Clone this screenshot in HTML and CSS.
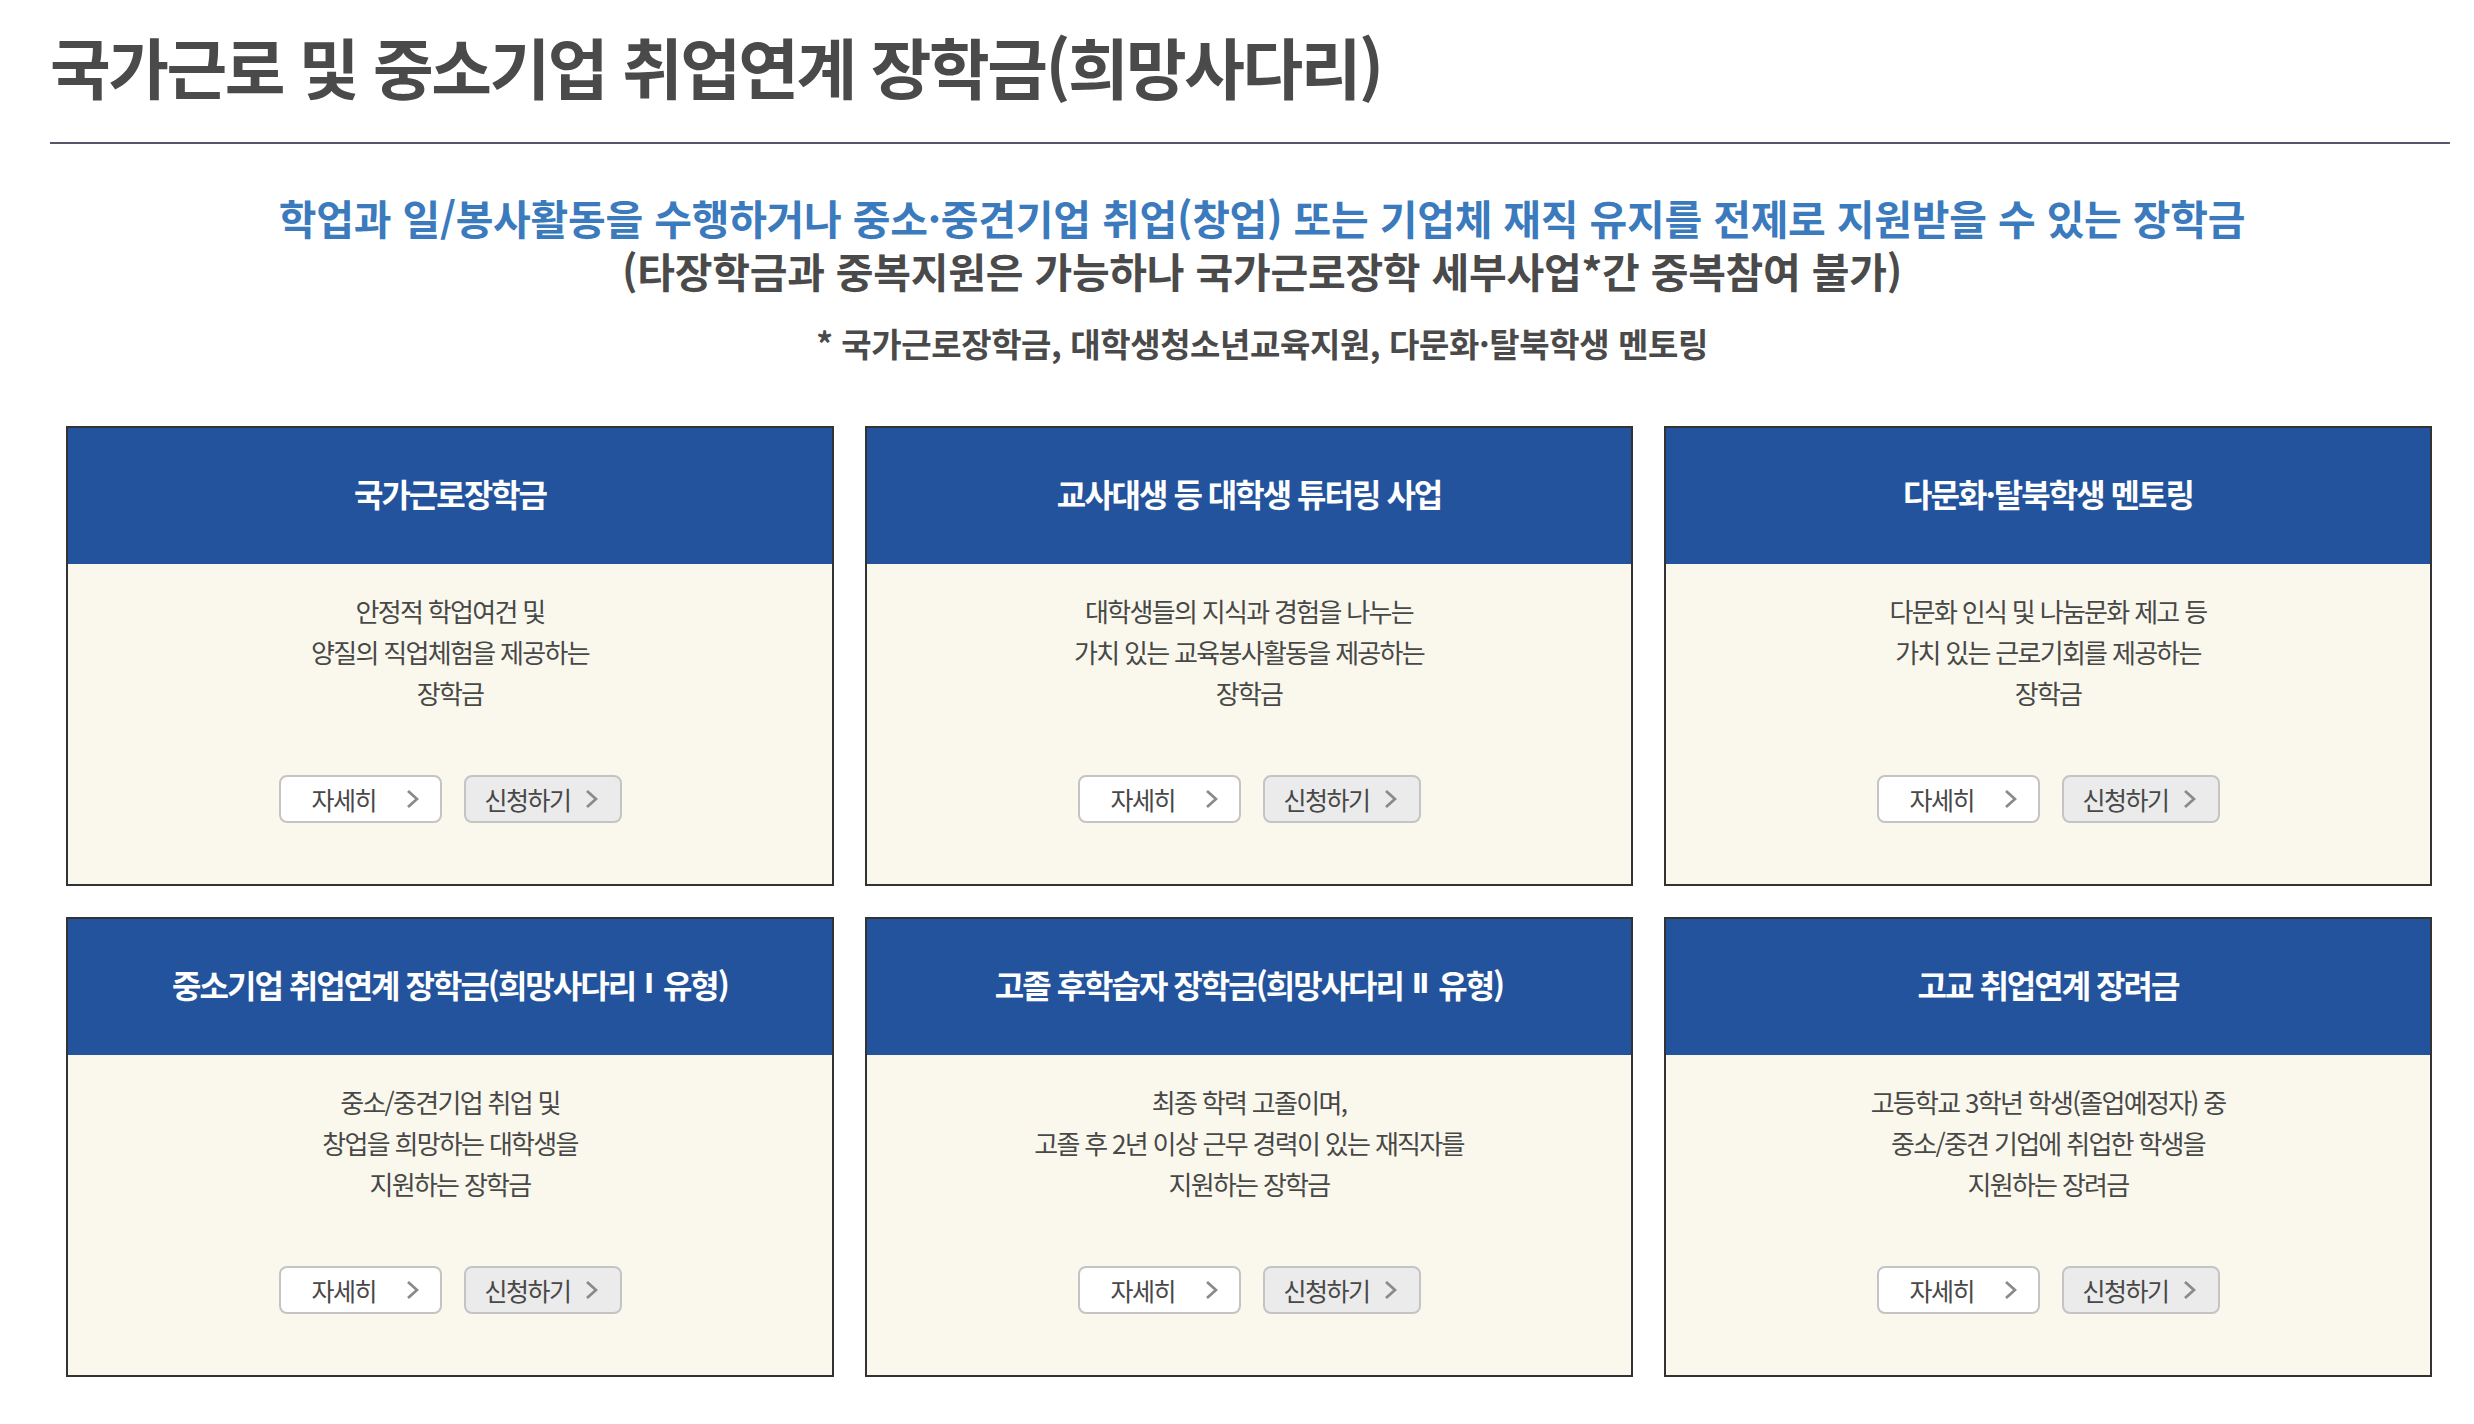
FILE: index.html
```html
<!DOCTYPE html>
<html lang="ko">
<head>
<meta charset="utf-8">
<title>국가근로 및 중소기업 취업연계 장학금(희망사다리)</title>
<link rel="stylesheet" href="styles.css">
</head>
<body>
<div class="page">
  <h1 class="page-title">국가근로 및 중소기업 취업연계 장학금(희망사다리)</h1>

  <div class="intro">
    <p class="intro-main">학업과 일/봉사활동을 수행하거나 중소·중견기업 취업(창업) 또는 기업체 재직 유지를 전제로 지원받을 수 있는 장학금</p>
    <p class="intro-sub">(타장학금과 중복지원은 가능하나 국가근로장학 세부사업*간 중복참여 불가)</p>
    <p class="intro-note">* 국가근로장학금, 대학생청소년교육지원, 다문화·탈북학생 멘토링</p>
  </div>

  <div class="cards">
    <div class="card">
      <div class="card-head">국가근로장학금</div>
      <div class="card-body">
        <p class="card-text">안정적 학업여건 및<br>양질의 직업체험을 제공하는<br>장학금</p>
        <div class="card-btns">
          <a class="btn btn-detail">자세히<svg class="chev" viewBox="0 0 13 20"><polyline points="2,2 11,10 2,18"/></svg></a>
          <a class="btn btn-apply">신청하기<svg class="chev" viewBox="0 0 13 20"><polyline points="2,2 11,10 2,18"/></svg></a>
        </div>
      </div>
    </div>
    <div class="card">
      <div class="card-head">교사대생 등 대학생 튜터링 사업</div>
      <div class="card-body">
        <p class="card-text">대학생들의 지식과 경험을 나누는<br>가치 있는 교육봉사활동을 제공하는<br>장학금</p>
        <div class="card-btns">
          <a class="btn btn-detail">자세히<svg class="chev" viewBox="0 0 13 20"><polyline points="2,2 11,10 2,18"/></svg></a>
          <a class="btn btn-apply">신청하기<svg class="chev" viewBox="0 0 13 20"><polyline points="2,2 11,10 2,18"/></svg></a>
        </div>
      </div>
    </div>
    <div class="card">
      <div class="card-head">다문화·탈북학생 멘토링</div>
      <div class="card-body">
        <p class="card-text">다문화 인식 및 나눔문화 제고 등<br>가치 있는 근로기회를 제공하는<br>장학금</p>
        <div class="card-btns">
          <a class="btn btn-detail">자세히<svg class="chev" viewBox="0 0 13 20"><polyline points="2,2 11,10 2,18"/></svg></a>
          <a class="btn btn-apply">신청하기<svg class="chev" viewBox="0 0 13 20"><polyline points="2,2 11,10 2,18"/></svg></a>
        </div>
      </div>
    </div>
    <div class="card">
      <div class="card-head">중소기업 취업연계 장학금(희망사다리<span class="roman"> Ⅰ </span>유형)</div>
      <div class="card-body">
        <p class="card-text">중소/중견기업 취업 및<br>창업을 희망하는 대학생을<br>지원하는 장학금</p>
        <div class="card-btns">
          <a class="btn btn-detail">자세히<svg class="chev" viewBox="0 0 13 20"><polyline points="2,2 11,10 2,18"/></svg></a>
          <a class="btn btn-apply">신청하기<svg class="chev" viewBox="0 0 13 20"><polyline points="2,2 11,10 2,18"/></svg></a>
        </div>
      </div>
    </div>
    <div class="card">
      <div class="card-head">고졸 후학습자 장학금(희망사다리<span class="roman"> Ⅱ </span>유형)</div>
      <div class="card-body">
        <p class="card-text">최종 학력 고졸이며,<br>고졸 후 2년 이상 근무 경력이 있는 재직자를<br>지원하는 장학금</p>
        <div class="card-btns">
          <a class="btn btn-detail">자세히<svg class="chev" viewBox="0 0 13 20"><polyline points="2,2 11,10 2,18"/></svg></a>
          <a class="btn btn-apply">신청하기<svg class="chev" viewBox="0 0 13 20"><polyline points="2,2 11,10 2,18"/></svg></a>
        </div>
      </div>
    </div>
    <div class="card">
      <div class="card-head">고교 취업연계 장려금</div>
      <div class="card-body">
        <p class="card-text">고등학교 3학년 학생(졸업예정자) 중<br>중소/중견 기업에 취업한 학생을<br>지원하는 장려금</p>
        <div class="card-btns">
          <a class="btn btn-detail">자세히<svg class="chev" viewBox="0 0 13 20"><polyline points="2,2 11,10 2,18"/></svg></a>
          <a class="btn btn-apply">신청하기<svg class="chev" viewBox="0 0 13 20"><polyline points="2,2 11,10 2,18"/></svg></a>
        </div>
      </div>
    </div>
  </div>
</div>
</body>
</html>
```

FILE: styles.css
```css
* { box-sizing: border-box; }

html, body {
  margin: 0;
  padding: 0;
  background: #ffffff;
}

body {
  font-family: "Noto Sans CJK KR", "Noto Sans", sans-serif;
  color: #444444;
}

.page {
  width: 2400px;
  margin-left: 50px;
  padding-top: 25px;
}

.page-title {
  margin: 0;
  font-size: 66px;
  line-height: 80px;
  font-weight: 700;
  letter-spacing: -2.5px;
  color: #4a4a4a;
  padding-bottom: 37px;
  border-bottom: 2px solid #55566a;
}

.intro {
  text-align: center;
  padding-top: 47px;
  padding-left: 24px;
}

.intro p { margin: 0; }

.intro-main,
.intro-sub {
  font-size: 41px;
  line-height: 53px;
  font-weight: 700;
  letter-spacing: -0.25px;
}

.intro-main { color: #3a7abd; }
.intro-sub { color: #4a4a4a; }

.intro .intro-note {
  margin-top: 25px;
  font-size: 33px;
  line-height: 42px;
  font-weight: 700;
  color: #4a4a4a;
  letter-spacing: -0.4px;
}

.cards {
  display: grid;
  grid-template-columns: repeat(3, 1fr);
  column-gap: 31px;
  row-gap: 31px;
  padding: 0 18px 0 16px;
  margin-top: 62px;
}

.card {
  border: 2px solid #333333;
  background: #faf8ed;
}

.card-head {
  height: 136px;
  padding-bottom: 6px;
  background: #22539c;
  color: #ffffff;
  font-size: 32px;
  font-weight: 700;
  letter-spacing: -2px;
  display: flex;
  align-items: center;
  justify-content: center;
}

.roman {
  font-family: "DejaVu Sans", "Liberation Sans", sans-serif;
  font-size: 26px;
  letter-spacing: 0;
  white-space: pre;
}

.card-body {
  padding: 26px 0 61px;
  text-align: center;
}

.card-text {
  margin: 0;
  font-size: 26px;
  line-height: 41px;
  letter-spacing: -1.7px;
  color: #484848;
}

.card-btns {
  margin-top: 62px;
  display: flex;
  justify-content: center;
  gap: 22px;
}

.btn {
  height: 48px;
  display: inline-flex;
  align-items: center;
  border: 2px solid #c4c4c4;
  border-radius: 8px;
  font-size: 25px;
  letter-spacing: -1.5px;
  color: #484848;
}

.btn-detail {
  width: 163px;
  padding-left: 31px;
  gap: 30px;
  background: #ffffff;
}

.btn-apply {
  width: 158px;
  padding-left: 19px;
  gap: 14px;
  background: #ebebeb;
}

.chev {
  width: 13px;
  height: 20px;
  flex: none;
}

.chev polyline {
  fill: none;
  stroke: #8a8a8a;
  stroke-width: 2.8;
}
```
